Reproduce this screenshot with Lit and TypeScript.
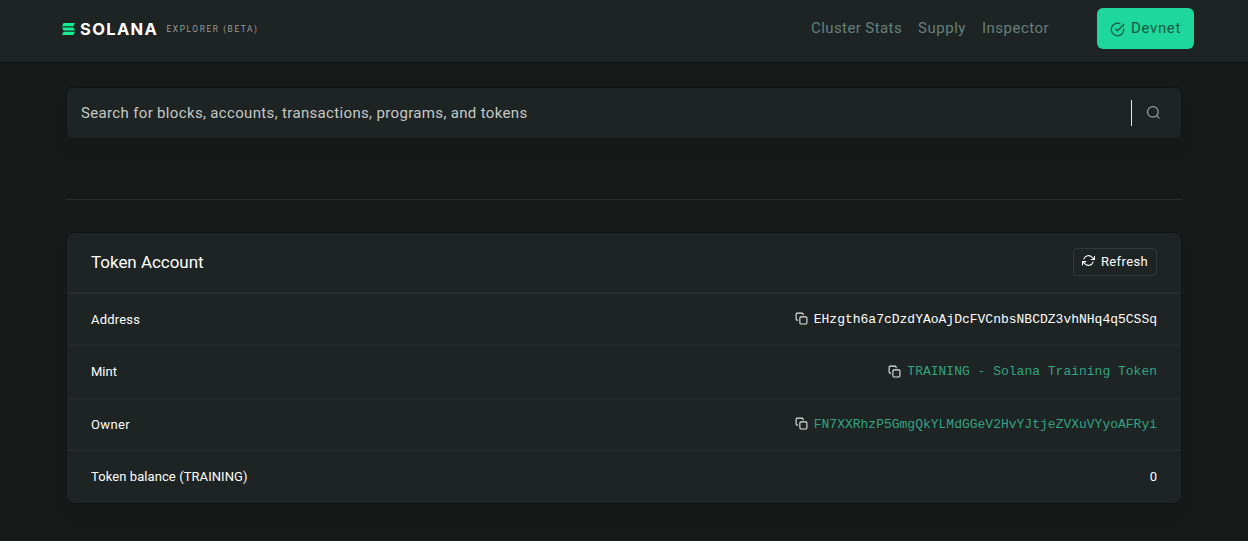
import { LitElement, html, css, svg, nothing } from "lit";
import { customElement } from "lit/decorators.js";
import { classMap } from "lit/directives/class-map.js";

const copyIcon = svg`
  <path d="M9 11a2 2 0 0 1 2-2h9a2 2 0 0 1 2 2v9a2 2 0 0 1-2 2h-9a2 2 0 0 1-2-2z" />
  <path d="M5 15H4a2 2 0 0 1-2-2V4a2 2 0 0 1 2-2h9a2 2 0 0 1 2 2v1" />`;
const searchIcon = svg`<circle cx="11" cy="11" r="8.5" /><path d="M21 21l-4-4" />`;
const checkIcon = svg`
  <path d="M22 11.08V12a10 10 0 1 1-5.93-9.14" />
  <path d="M22 4L12 14.01l-3-3" />`;
const refreshIcon = svg`
  <path d="M23 4v6h-6" /><path d="M1 20v-6h6" />
  <path d="M3.51 9a9 9 0 0 1 14.85-3.36L23 10M1 14l4.64 4.36A9 9 0 0 0 20.49 15" />`;

const icon = (shape: unknown, name: string) => html`
  <svg class="icon ${name}" viewBox="0 0 24 24" aria-hidden="true">${shape}</svg>`;

interface Row {
  label: string;
  key: string;
  value: string;
  copy?: boolean;
  link?: boolean;
}

const rows: Row[] = [
  { label: "Address", key: "address", value: "EHzgth6a7cDzdYAoAjDcFVCnbsNBCDZ3vhNHq4q5CSSq", copy: true },
  { label: "Mint", key: "mint", value: "TRAINING - Solana Training Token", copy: true, link: true },
  { label: "Owner", key: "owner", value: "FN7XXRhzP5GmgQkYLMdGGeV2HvYJtjeZVXuVYyoAFRyi", copy: true, link: true },
  { label: "Token balance (TRAINING)", key: "balance", value: "0" },
];

@customElement("app-root")
export class AppRoot extends LitElement {
  static styles = css`
    :host {
      display: block;
      box-sizing: border-box;
      height: 541px;
      overflow: hidden;
      background: #161b19;
      color: #fff;
      font: 13px/20px Roboto, "Noto Sans", sans-serif;
    }
    * { box-sizing: border-box; }
    .icon {
      display: block;
      flex: none;
      width: 14px;
      height: 14px;
      fill: none;
      stroke: currentColor;
      stroke-width: 2;
      stroke-linecap: round;
      stroke-linejoin: round;
    }
    .navbar {
      display: flex;
      align-items: flex-start;
      justify-content: space-between;
      height: 63px;
      padding: 8px 54px 0 62px;
      background: #1e2423;
      border-bottom: 1px solid #111413;
    }
    .brand { display: flex; align-items: center; height: 41px; }
    .mark { display: block; width: 13px; height: 12px; margin: 1px 5px 0 0; fill: #14f195; }
    .word {
      width: 86.5px;
      font-family: Inter, sans-serif;
      font-size: 16.5px;
      font-weight: 700;
      line-height: 20px;
      letter-spacing: 1.35px;
    }
    .tagline {
      padding-top: 1px;
      font-size: 8.3px;
      letter-spacing: 1.62px;
      color: #9a9d9c;
      white-space: nowrap;
    }
    .menu { display: flex; align-items: center; height: 41px; font-size: 15px; color: #65807c; }
    .menu a { padding-bottom: 2px; white-space: nowrap; }
    .stats { width: 107px; letter-spacing: 0.41px; }
    .supply { width: 64px; letter-spacing: 0.53px; }
    .inspector { width: 115px; letter-spacing: 0.48px; }
    .cluster {
      display: flex;
      align-items: center;
      width: 97px;
      height: 41px;
      padding: 0 0 2px 13px;
      border: 0;
      border-radius: 6px;
      background: #1dd79b;
      color: #1b5846;
      font: inherit;
      letter-spacing: 0.65px;
    }
    .check { width: 15px; height: 15px; margin: 3px 6px 0 0; }
    .content { margin: 24px 66px 0; }
    .search {
      display: flex;
      align-items: center;
      height: 52px;
      padding: 0 20px 0 14px;
      border: 1px solid #111413;
      border-radius: 6px;
      background: #1e2423;
      box-shadow: 0 12px 24px rgba(18, 38, 63, 0.03);
      font-size: 15px;
      color: #c6c8c7;
    }
    .placeholder { flex: 1; letter-spacing: 0.34px; }
    .caret { width: 1px; height: 26px; margin-right: 14px; background: #e4e6e5; }
    .find { width: 15px; height: 15px; margin-bottom: 1px; color: #9b9e9d; }
    .rule { height: 1px; margin: 60px 0 32px; background: #282d2b; }
    .card {
      height: 272px;
      overflow: hidden;
      border: 1px solid #111413;
      border-radius: 8px;
      background: #1e2423;
      box-shadow: 0 12px 24px rgba(18, 38, 63, 0.03);
    }
    .card-header {
      display: flex;
      align-items: center;
      justify-content: space-between;
      height: 61px;
      padding: 0 24px;
      border-bottom: 2px solid #282d2b;
    }
    .title { margin: 0 0 1px; font-size: 17px; font-weight: 400; line-height: 20px; letter-spacing: -0.03px; }
    .refresh {
      display: flex;
      align-items: center;
      width: 84px;
      height: 28px;
      margin-bottom: 1px;
      padding: 0 0 1px 8px;
      border: 1px solid #343a37;
      border-radius: 4px;
      background: transparent;
      color: #fff;
      font: inherit;
      letter-spacing: 0.36px;
    }
    .reload { width: 13px; height: 13px; margin: 0 6px 2px 0; }
    .row {
      display: flex;
      align-items: center;
      justify-content: space-between;
      height: 52.46px;
      padding: 0 24px;
    }
    .card-header + .row { height: 51.46px; }
    .row + .row { border-top: 1px solid #282d2b; }
    .address { letter-spacing: 0.19px; }
    .owner { letter-spacing: 0.36px; }
    .balance { letter-spacing: 0.08px; }
    .value { display: flex; align-items: center; gap: 6px; }
    .value .copy { width: 13px; height: 13px; margin-bottom: 2px; color: #e8eae9; }
    .mono { font-family: "Liberation Mono", monospace; }
    .link { color: #33a382; }
  `;

  render() {
    return html`
      <nav class="navbar">
        <div class="brand">
          <svg class="mark" viewBox="0 0 13 12" aria-hidden="true">
            <path d="M1.6 0H13l-1.6 3.3H0z" />
            <path d="M0 4.4h11.4L13 7.6H1.6z" />
            <path d="M1.6 8.7H13L11.4 12H0z" />
          </svg>
          <span class="word">SOLANA</span>
          <span class="tagline">EXPLORER (BETA)</span>
        </div>
        <div class="menu">
          <a class="stats">Cluster Stats</a>
          <a class="supply">Supply</a>
          <a class="inspector">Inspector</a>
          <button class="cluster">${icon(checkIcon, "check")}Devnet</button>
        </div>
      </nav>
      <main class="content">
        <div class="search">
          <span class="placeholder">Search for blocks, accounts, transactions, programs, and tokens</span>
          <span class="caret"></span>
          ${icon(searchIcon, "find")}
        </div>
        <div class="rule"></div>
        <section class="card">
          <header class="card-header">
            <h3 class="title">Token Account</h3>
            <button class="refresh">${icon(refreshIcon, "reload")}Refresh</button>
          </header>
          ${rows.map((row) => html`
            <div class="row">
              <span class=${row.key}>${row.label}</span>
              <span class="value">
                ${row.copy ? icon(copyIcon, "copy") : nothing}
                <span class=${classMap({ mono: !!row.copy, link: !!row.link })}>${row.value}</span>
              </span>
            </div>`)}
        </section>
      </main>
    `;
  }
}
